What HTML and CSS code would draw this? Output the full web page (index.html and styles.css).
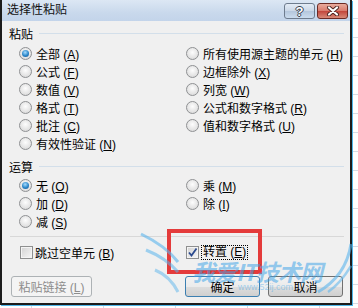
FILE: index.html
```html
<!DOCTYPE html>
<html lang="zh-CN">
<head>
    <meta charset="UTF-8">
    <meta name="viewport" content="width=device-width, initial-scale=1.0">
    <title>选择性粘贴</title>
    <link rel="stylesheet" href="styles.css">
</head>
<body>
    <div class="dialog">
        <!-- Title Bar -->
        <div class="titlebar">
            <span class="title">选择性粘贴</span>
            <div class="caption-btns">
                <div class="cap help">?</div>
                <div class="cap close">
                    <svg width="14" height="10" viewBox="0 0 14 10">
                        <path d="M3 1.5 L11 8.5 M11 1.5 L3 8.5" stroke="#4a2420" stroke-width="4" stroke-linecap="round"/>
                        <path d="M3 1.5 L11 8.5 M11 1.5 L3 8.5" stroke="#fff" stroke-width="2.2" stroke-linecap="round"/>
                    </svg>
                </div>
            </div>
        </div>

        <div class="content">
            <!-- Paste Group -->
            <div class="legend"><span>粘贴</span><i class="rule"></i></div>
            <div class="options">
                <label class="opt"><span class="radio on"></span><span>全部 (<u>A</u>)</span></label>
                <label class="opt"><span class="radio"></span><span>所有使用源主题的单元 (<u>H</u>)</span></label>
                <label class="opt"><span class="radio"></span><span>公式 (<u>F</u>)</span></label>
                <label class="opt"><span class="radio"></span><span>边框除外 (<u>X</u>)</span></label>
                <label class="opt"><span class="radio"></span><span>数值 (<u>V</u>)</span></label>
                <label class="opt"><span class="radio"></span><span>列宽 (<u>W</u>)</span></label>
                <label class="opt"><span class="radio"></span><span>格式 (<u>T</u>)</span></label>
                <label class="opt"><span class="radio"></span><span>公式和数字格式 (<u>R</u>)</span></label>
                <label class="opt"><span class="radio"></span><span>批注 (<u>C</u>)</span></label>
                <label class="opt"><span class="radio"></span><span>值和数字格式 (<u>U</u>)</span></label>
                <label class="opt"><span class="radio"></span><span>有效性验证 (<u>N</u>)</span></label>
            </div>

            <!-- Operation Group -->
            <div class="legend op"><span>运算</span><i class="rule"></i></div>
            <div class="options ops">
                <label class="opt"><span class="radio on"></span><span>无 (<u>O</u>)</span></label>
                <label class="opt"><span class="radio"></span><span>乘 (<u>M</u>)</span></label>
                <label class="opt"><span class="radio"></span><span>加 (<u>D</u>)</span></label>
                <label class="opt"><span class="radio"></span><span>除 (<u>I</u>)</span></label>
                <label class="opt"><span class="radio"></span><span>减 (<u>S</u>)</span></label>
            </div>

            <div class="divider"></div>

            <!-- Checkboxes -->
            <div class="options checks">
                <label class="opt"><span class="check"></span><span>跳过空单元 (<u>B</u>)</span></label>
                <label class="opt">
                    <span class="check">
                        <svg width="11" height="11" viewBox="0 0 11 11">
                            <path d="M2 5.5 L4.5 8.5 L9.5 1.5" fill="none" stroke="#2b4a8e" stroke-width="1.8"/>
                        </svg>
                    </span>
                    <span class="focus">转置 (<u>E</u>)</span>
                </label>
            </div>

            <!-- Buttons -->
            <div class="buttons">
                <div class="btn disabled"><span>粘贴链接 (<u>L</u>)</span></div>
                <div class="spacer"></div>
                <div class="btn default">确定</div>
                <div class="btn">取消</div>
            </div>
        </div>

        <!-- Annotation + watermark overlay -->
        <div class="mark-box"></div>
        <svg class="swoosh" width="352" height="305" viewBox="0 0 352 305">
            <path d="M141 234 Q166 246 178 262" fill="none" stroke="#5ab4ec" stroke-width="3" opacity="0.6"/>
            <path d="M146 250 Q166 258 178 272" fill="none" stroke="#5ab4ec" stroke-width="3" opacity="0.55"/>
            <path d="M155 270 Q170 276 178 292" fill="none" stroke="#5ab4ec" stroke-width="3" opacity="0.5"/>
            <path d="M351 244 Q346 276 318 292" fill="none" stroke="#5ab4ec" stroke-width="3" opacity="0.6"/>
            <path d="M351 266 Q340 284 328 292" fill="none" stroke="#5ab4ec" stroke-width="2.5" opacity="0.55"/>
        </svg>
        <div class="watermark">
            <span class="wm-big">我爱IT技术网</span>
            <span class="wm-small">www.52ij.com</span>
        </div>
    </div>
</body>
</html>
```

FILE: styles.css
```css
/* Reset */
* {
    box-sizing: border-box;
    margin: 0;
    padding: 0;
}
body {
    width: 358px;
    height: 308px;
    overflow: hidden;
    font-family: "Liberation Sans", "Noto Sans CJK SC", sans-serif;
    font-size: 12px;
    color: #000;
    background-color: #fff;
    background-image:
        repeating-linear-gradient(to bottom, transparent 0, transparent 18px, #d6dbe4 18px, #d6dbe4 19px),
        repeating-linear-gradient(to right, transparent 0, transparent 31px, #d6dbe4 31px, #d6dbe4 32px, transparent 32px, transparent 72px);
}
u {
    text-decoration: underline;
    text-underline-offset: 1px;
}

/* Dialog Frame */
.dialog {
    position: relative;
    width: 352px;
    height: 305px;
    background: #f0f0f0;
    border: 2px solid #1c1c1c;
    border-top: none;
    box-shadow: 1px 1px 0 #4fb7ea;
    display: flex;
    flex-direction: column;
}

/* Title Bar */
.titlebar {
    height: 21px;
    display: flex;
    align-items: flex-start;
    background: linear-gradient(to bottom, #dce7f4, #c9d9ec 60%, #c3d4ea);
}
.title {
    padding-left: 5px;
    line-height: 21px;
    font-size: 12px;
    color: #111;
}
.caption-btns {
    margin-left: auto;
    margin-top: 3px;
    margin-right: 2px;
    display: flex;
    gap: 2px;
}
.cap {
    width: 31px;
    height: 16px;
    border-radius: 3px;
    display: flex;
    align-items: center;
    justify-content: center;
}
.help {
    border: 1px solid #6e7c8e;
    background: linear-gradient(to bottom, #e4ecf6, #cad7e7 50%, #b4c6dc 51%, #cbdcee);
    font-weight: bold;
    font-size: 13px;
    color: #fff;
    text-shadow: 1px 0 0 #35404e, -1px 0 0 #35404e, 0 1px 0 #35404e, 0 -1px 0 #35404e;
}
.close {
    border: 1px solid #6c2a24;
    background: linear-gradient(to bottom, #e9ab9d, #d87a6c 50%, #c2453a 51%, #d88a78);
}

/* Content */
.content {
    flex: 1;
    padding: 0 6px 0 7px;
    display: flex;
    flex-direction: column;
}
.legend {
    height: 14px;
    margin-top: 5px;
    display: flex;
    align-items: center;
    gap: 6px;
}
.legend.op {
    margin-top: 7px;
}
.rule {
    flex: 1;
    height: 1px;
    background: #d3dfea;
}

/* Radio + checkbox grids */
.options {
    margin-top: 4px;
    padding-left: 10px;
    display: grid;
    grid-template-columns: 167px 1fr;
    grid-auto-rows: 18px;
}
.options.ops {
    margin-top: 3px;
}
.options.checks {
    margin-top: 6px;
    padding-left: 11px;
    grid-template-columns: 166px 1fr;
}
.opt {
    display: flex;
    align-items: center;
    gap: 4px;
    white-space: pre;
}
.checks .opt {
    gap: 2px;
}
.radio {
    flex: none;
    width: 13px;
    height: 13px;
    border-radius: 50%;
    border: 1px solid #8f9193;
    background: radial-gradient(circle at 50% 40%, #fdfdfd, #e2e2e2 65%, #d0d0d0);
    display: flex;
    align-items: center;
    justify-content: center;
}
.radio.on::after {
    content: "";
    width: 7px;
    height: 7px;
    border-radius: 50%;
    background: radial-gradient(circle at 45% 35%, #a6dcff, #2a86c8 55%, #1a4d8a);
}
.check {
    flex: none;
    width: 13px;
    height: 13px;
    border: 1px solid #8e8f8f;
    background: linear-gradient(135deg, #d2d2d2, #f7f7f7);
    box-shadow: inset 0 0 0 1px #f4f4f4;
    display: flex;
    align-items: center;
    justify-content: center;
}
.focus {
    border: 1px dotted #000;
    padding: 0 1px;
    line-height: 13px;
}

.divider {
    margin-top: 6px;
    margin-left: 1px;
    height: 1px;
    background: #d8d8d8;
}

/* Buttons */
.buttons {
    margin-top: 15px;
    display: flex;
    gap: 8px;
}
.spacer {
    flex: 1;
}
.btn {
    width: 75px;
    height: 21px;
    border: 1px solid #707070;
    border-radius: 3px;
    background: linear-gradient(to bottom, #f2f2f2, #ebebeb 50%, #dddddd 51%, #cfcfcf);
    display: flex;
    align-items: center;
    justify-content: center;
    white-space: pre;
}
.btn:last-child {
    margin-right: 1px;
}
.btn.default {
    border-color: #3c7fb1;
}
.btn.disabled {
    width: 81px;
    margin-left: 2px;
    border-color: #adb2b5;
    background: #f4f4f4;
    color: #8d8d8d;
}

/* Red annotation box */
.mark-box {
    position: absolute;
    left: 165px;
    top: 229px;
    width: 95px;
    height: 45px;
    border: 4px solid #e43b3b;
    pointer-events: none;
}

/* Watermark */
.swoosh {
    position: absolute;
    left: -2px;
    top: 0;
    pointer-events: none;
}
.watermark {
    position: absolute;
    left: 190px;
    top: 258px;
    display: flex;
    flex-direction: column;
    align-items: flex-start;
    pointer-events: none;
    color: rgba(64, 164, 232, 0.55);
}
.wm-big {
    font-family: "Noto Sans CJK SC", sans-serif;
    font-size: 23px;
    font-weight: bold;
    font-style: italic;
    line-height: 27px;
    letter-spacing: -1px;
}
.wm-small {
    margin-left: 46px;
    margin-top: -3px;
    font-size: 9px;
    line-height: 10px;
    color: rgba(64, 164, 232, 0.45);
}
```
